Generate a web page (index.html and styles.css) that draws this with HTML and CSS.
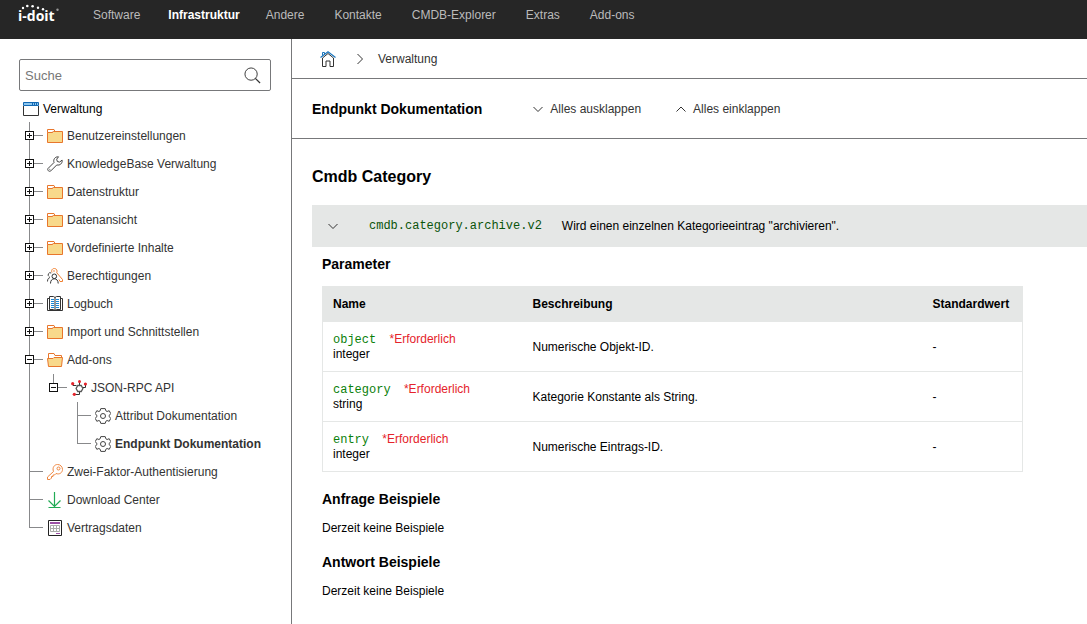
FILE: index.html
```html
<!DOCTYPE html>
<html lang="de">
<head>
  <meta charset="UTF-8">
  <meta name="viewport" content="width=device-width, initial-scale=1.0">
  <title>i-doit - Endpunkt Dokumentation</title>
  <link rel="stylesheet" href="styles.css">
</head>
<body>

<!-- shared icons -->
<svg class="sprite" aria-hidden="true">
  <symbol id="folder" viewBox="0 0 16 16">
    <path d="M.5 4.5H5l1.500-1H15.500V14.500H.5z" fill="#f8d98b" stroke="#e8762c"/>
    <path d="M.5 4.500V1.500H7l1 2H6.500l-1.500 1z" fill="#fff" stroke="#e8762c"/>
  </symbol>
  <symbol id="folder-open" viewBox="0 0 16 16">
    <path d="M1.500 6V1.500H7l1 2h6.500V6" fill="#fff" stroke="#e8762c"/>
    <path d="M.5 6.500H6l1-1h8.500l-1 9h-13z" fill="#f8d98b" stroke="#e8762c"/>
  </symbol>
  <symbol id="gear" viewBox="0 0 16 16">
    <path d="M5.800.6h4.400l.7 2.200 1.200.7 2.100-.8 1.600 3-1.500 1.500v1.600l1.500 1.500-1.600 3-2.100-.8-1.200.7-.7 2.200H5.800l-.7-2.200-1.200-.7-2.100.8-1.600-3 1.500-1.500V7.200L.2 5.700l1.600-3 2.100.8 1.200-.7z" fill="none" stroke="#444" stroke-linejoin="round"/>
    <circle cx="8" cy="8" r="2.500" fill="none" stroke="#444"/>
  </symbol>
  <symbol id="chevron-down" viewBox="0 0 10 10">
    <path d="M.5 3L5 7.500 9.500 3" fill="none" stroke="#333"/>
  </symbol>
  <symbol id="chevron-up" viewBox="0 0 10 10">
    <path d="M.5 7.500L5 3l4.500 4.500" fill="none" stroke="#333"/>
  </symbol>
</svg>

<header class="topbar">
  <a class="logo" href="#" aria-label="i-doit">
    <svg width="44" height="24" viewBox="0 0 44 24">
      <text x="0" y="21" class="logo-text">i-doit</text>
      <g fill="#fff">
        <circle cx="5" cy="8" r="1.200"/>
        <circle cx="9.300" cy="6" r="1.300"/>
        <circle cx="14.600" cy="6.200" r="1.300"/>
        <circle cx="20" cy="7.800" r="1.200"/>
        <circle cx="25" cy="9.300" r="1.200"/>
      </g>
      <circle cx="39.500" cy="9.700" r="1.200" fill="#999"/>
    </svg>
  </a>
  <nav class="main-nav">
    <a href="#">Software</a>
    <a href="#" class="active">Infrastruktur</a>
    <a href="#">Andere</a>
    <a href="#">Kontakte</a>
    <a href="#">CMDB-Explorer</a>
    <a href="#">Extras</a>
    <a href="#">Add-ons</a>
  </nav>
</header>

<div class="page">
  <aside class="sidebar">
    <form class="search">
      <input type="text" placeholder="Suche" aria-label="Suche">
      <button type="button" aria-label="Suchen">
        <svg width="17" height="17" viewBox="0 0 18 18" fill="none" stroke="#333"><circle cx="7.500" cy="7.500" r="6.500"/><path d="M12 12l5 5" stroke-width="1.300"/></svg>
      </button>
    </form>

    <a class="tree-root" href="#">
      <svg class="icon" viewBox="0 0 16 16"><path d="M.5 4v9.500h15V4" fill="#fff" stroke="#333"/><path d="M.5 .5h15v3H.5z" fill="#8cc6ee" stroke="#1268b3"/><path d="M9.500 1v2M11.500 1v2M13.500 1v2" stroke="#1268b3"/></svg>
      Verwaltung
    </a>
    <ul class="tree">
      <li>
        <div class="row">
          <span class="joint"><button class="toggle" aria-label="Ausklappen"></button></span>
          <a href="#"><svg class="icon"><use href="#folder"/></svg>Benutzereinstellungen</a>
        </div>
      </li>
      <li>
        <div class="row">
          <span class="joint"><button class="toggle" aria-label="Ausklappen"></button></span>
          <a href="#"><svg class="icon" viewBox="0 0 16 16"><path d="M1 12.500l6-6C6 3.500 8 .5 11.500.8L9.700 3.200l.6 2.300 2.300.6 2.500-2c.6 3.300-2.400 5.700-5.300 4.800l-6 6c-1.600 1.300-3.900-.8-2.800-2.400z" fill="#fff" stroke="#444"/><circle cx="2.800" cy="13.200" r=".5" fill="#444"/></svg>KnowledgeBase Verwaltung</a>
        </div>
      </li>
      <li>
        <div class="row">
          <span class="joint"><button class="toggle" aria-label="Ausklappen"></button></span>
          <a href="#"><svg class="icon"><use href="#folder"/></svg>Datenstruktur</a>
        </div>
      </li>
      <li>
        <div class="row">
          <span class="joint"><button class="toggle" aria-label="Ausklappen"></button></span>
          <a href="#"><svg class="icon"><use href="#folder"/></svg>Datenansicht</a>
        </div>
      </li>
      <li>
        <div class="row">
          <span class="joint"><button class="toggle" aria-label="Ausklappen"></button></span>
          <a href="#"><svg class="icon"><use href="#folder"/></svg>Vordefinierte Inhalte</a>
        </div>
      </li>
      <li>
        <div class="row">
          <span class="joint"><button class="toggle" aria-label="Ausklappen"></button></span>
          <a href="#">
            <svg class="icon" viewBox="0 0 16 16" fill="none"><path d="M5 4.500C3.500 1.500 7-.8 9.200 1.200c1 1 1 2.500.5 3.500l5.800 6.800v2h-2.500l-1-2" stroke="#f08030"/><circle cx="7" cy="3" r=".8" fill="#f08030"/><path d="M.5 13.500c0-2.500 1-3.500 2.500-4M2.200 8.500a2 2 0 0 1 2-3.500" stroke="#444"/><circle cx="7.300" cy="8.300" r="2.300" fill="#fff" stroke="#333"/><path d="M3.500 15.500c0-3 1.500-4.700 3.800-4.700s3.900 1.700 3.900 4.700" stroke="#333"/></svg>Berechtigungen
          </a>
        </div>
      </li>
      <li>
        <div class="row">
          <span class="joint"><button class="toggle" aria-label="Ausklappen"></button></span>
          <a href="#">
            <svg class="icon" viewBox="0 0 16 16" fill="none"><path d="M2.500.5h4L8 1.500l1.500-1h4v13h-4L8 14.500l-1.500-1h-4z" fill="#fff" stroke="#333"/><path d="M2.500 2.500h-2v12h15v-12h-2M8 1.500v13" stroke="#333"/><path d="M4 3.500h3M4 5.500h3M4 7.500h3M4 9.500h3M4 11.500h3M9 3.500h3M9 5.500h3M9 7.500h3M9 9.500h3M9 11.500h3" stroke="#1b87d6" stroke-width="1.200"/></svg>Logbuch
          </a>
        </div>
      </li>
      <li>
        <div class="row">
          <span class="joint"><button class="toggle" aria-label="Ausklappen"></button></span>
          <a href="#"><svg class="icon"><use href="#folder"/></svg>Import und Schnittstellen</a>
        </div>
      </li>
      <li>
        <div class="row">
          <span class="joint"><button class="toggle open" aria-label="Einklappen"></button></span>
          <a href="#"><svg class="icon"><use href="#folder-open"/></svg>Add-ons</a>
        </div>
        <ul>
          <li>
            <div class="row">
              <span class="joint"><button class="toggle open" aria-label="Einklappen"></button></span>
              <a href="#">
                <svg class="icon" viewBox="0 0 16 16" fill="none"><path d="M8.500 1.500v4M2 3v2.500h3.500M14.500 4v3.500h-3M3 14.500h5.500v-3" stroke="#333"/><path d="M6.800 5.500h3.400l1.700 3-1.700 3H6.800l-1.700-3z" fill="#fff" stroke="#555" stroke-width="1.300"/><g fill="#e5232b"><circle cx="8.500" cy="1.500" r="1.500"/><circle cx="1.700" cy="3.700" r="1.600"/><circle cx="14.400" cy="4" r="1.600"/><circle cx="3.300" cy="14.300" r="1.600"/></g></svg>JSON-RPC API
              </a>
            </div>
            <ul>
              <li>
                <div class="row">
                  <span class="joint"></span>
                  <a href="#"><svg class="icon"><use href="#gear"/></svg>Attribut Dokumentation</a>
                </div>
              </li>
              <li>
                <div class="row">
                  <span class="joint"></span>
                  <a href="#" class="selected"><svg class="icon"><use href="#gear"/></svg>Endpunkt Dokumentation</a>
                </div>
              </li>
            </ul>
          </li>
        </ul>
      </li>
      <li>
        <div class="row">
          <span class="joint"></span>
          <a href="#"><svg class="icon" viewBox="0 0 16 16" fill="none" stroke="#ee8640"><path d="M6.500 7.500C5 3.500 7.500.5 10.500.5c2.800 0 5 2.200 5 5 0 3-3 5.400-6.500 4L7.500 11H6v1.500H4.500V14L3 15.500H.5V13z"/><circle cx="11.500" cy="4.500" r="1.500"/></svg>Zwei-Faktor-Authentisierung</a>
        </div>
      </li>
      <li>
        <div class="row">
          <span class="joint"></span>
          <a href="#"><svg class="icon" viewBox="0 0 16 16" fill="none" stroke="#22ab55"><path d="M7.500 0v14.500M1.500 8.500l6 6 6-6M1.500 15.500h12" stroke-width="1.200"/></svg>Download Center</a>
        </div>
      </li>
      <li>
        <div class="row">
          <span class="joint"></span>
          <a href="#"><svg class="icon" viewBox="0 0 16 16" fill="none"><path d="M1.500.5h13v15h-13z" fill="#fff" stroke="#222"/><path d="M3 3h10" stroke="#9b4fa5" stroke-width="2"/><path d="M3.500 5.500h9v6h-9zM3.500 8.500h9M6.500 5.500v6M9.500 5.500v6" stroke="#aaa"/><path d="M9 13.500h4" stroke="#9b4fa5"/></svg>Vertragsdaten</a>
        </div>
      </li>
    </ul>
  </aside>

  <main class="content">
    <nav class="breadcrumb">
      <a href="#" aria-label="Startseite">
        <svg width="16" height="16" viewBox="0 0 16 16" fill="none"><path d="M2.500 7v8.500h3.500V10h4v5.500h3.500V7L8 2.500z" stroke="#333"/><path d="M.5 6.500L8 .8l7.500 5.700" stroke="#1b75bc" stroke-width="1.200"/><path d="M2.500 4.500V1.500h2v1.500" stroke="#1b75bc"/></svg>
      </a>
      <svg width="6" height="12" viewBox="0 0 6 12"><path d="M.5 1l5 5-5 5" fill="none" stroke="#333"/></svg>
      <a href="#">Verwaltung</a>
    </nav>

    <div class="title-bar">
      <h1>Endpunkt Dokumentation</h1>
      <button class="link-button"><svg width="10" height="10"><use href="#chevron-down"/></svg>Alles ausklappen</button>
      <button class="link-button"><svg width="10" height="10"><use href="#chevron-up"/></svg>Alles einklappen</button>
    </div>

    <div class="docs">
      <h2>Cmdb Category</h2>

      <button class="endpoint">
        <svg width="10" height="10"><use href="#chevron-down"/></svg>
        <code>cmdb.category.archive.v2</code>
        <span>Wird einen einzelnen Kategorieeintrag "archivieren".</span>
      </button>

      <div class="endpoint-body">
        <h3>Parameter</h3>
        <table class="params">
          <thead>
            <tr>
              <th class="col-name">Name</th>
              <th class="col-desc">Beschreibung</th>
              <th>Standardwert</th>
            </tr>
          </thead>
          <tbody>
            <tr>
              <td><code>object</code> <span class="required">*Erforderlich</span><br>integer</td>
              <td>Numerische Objekt-ID.</td>
              <td>-</td>
            </tr>
            <tr>
              <td><code>category</code> <span class="required">*Erforderlich</span><br>string</td>
              <td>Kategorie Konstante als String.</td>
              <td>-</td>
            </tr>
            <tr>
              <td><code>entry</code> <span class="required">*Erforderlich</span><br>integer</td>
              <td>Numerische Eintrags-ID.</td>
              <td>-</td>
            </tr>
          </tbody>
        </table>

        <h3>Anfrage Beispiele</h3>
        <p>Derzeit keine Beispiele</p>

        <h3>Antwort Beispiele</h3>
        <p>Derzeit keine Beispiele</p>
      </div>
    </div>
  </main>
</div>

</body>
</html>
```
FILE: styles.css
```css
* {
  box-sizing: border-box;
}

body {
  margin: 0;
  min-height: 100vh;
  display: flex;
  flex-direction: column;
  background: #fff;
  color: #000;
  font-family: "Liberation Sans", Arial, sans-serif;
  font-size: 12px;
  line-height: 16px;
}

a {
  color: #333;
  text-decoration: none;
}

button {
  padding: 0;
  border: none;
  background: none;
  color: inherit;
  font: inherit;
  cursor: pointer;
}

svg {
  display: block;
  flex: none;
}

code {
  font-family: "Liberation Mono", "Courier New", monospace;
  font-size: 12px;
}

.sprite {
  position: absolute;
  width: 0;
  height: 0;
}

/* top bar */
.topbar {
  display: flex;
  align-items: flex-start;
  gap: 17px;
  height: 39px;
  padding-left: 18px;
  background: #262626;
}

.logo-text {
  fill: #fff;
  font-family: "Open Sans", sans-serif;
  font-size: 14px;
  font-weight: bold;
}

.main-nav {
  display: flex;
}

.main-nav a {
  padding: 7px 15px 7px 14px;
  color: #bbb;
}

.main-nav a + a {
  padding-left: 15px;
}

.main-nav a.active {
  padding-left: 13px;
  padding-right: 11px;
  color: #fff;
  font-weight: bold;
}

.page {
  display: flex;
  flex: 1;
}

/* sidebar */
.sidebar {
  flex: none;
  width: 292px;
  padding: 20px 20px 20px 19px;
  border-right: 1px solid #77787a;
}

.search {
  display: flex;
  align-items: center;
  height: 32px;
  padding: 0 9px 0 5px;
  border: 1px solid #77787a;
  border-radius: 2px;
}

.search input {
  flex: 1;
  min-width: 0;
  padding: 0;
  border: none;
  outline: none;
  font: inherit;
  font-size: 13px;
  line-height: 15px;
}

.search input::placeholder {
  color: #777;
}

.icon {
  width: 16px;
  height: 16px;
  margin-top: 1px;
}

.tree-root {
  display: flex;
  align-items: center;
  gap: 4px;
  margin-top: 4px;
  padding-left: 4px;
  height: 27px;
  color: #000;
}

.tree-root .icon {
  margin-top: 2px;
}

.tree,
.tree ul {
  margin: 0;
  padding: 0;
  list-style: none;
}

.tree {
  padding-left: 6px;
}

.tree ul {
  padding-left: 24px;
}

.tree li {
  background: linear-gradient(#88898b, #88898b) 4px 0 / 1px 100% no-repeat;
}

.tree li:last-child {
  background-size: 1px 14px;
}

.row {
  display: flex;
  height: 28px;
  padding-bottom: 1px;
}

.joint {
  display: flex;
  align-items: center;
  width: 22px;
  background: linear-gradient(#88898b, #88898b) 4px 13px / 14px 1px no-repeat;
}

.toggle {
  width: 9px;
  height: 9px;
  border: 1px solid #111;
  background:
    linear-gradient(#111, #111) center / 5px 1px no-repeat,
    linear-gradient(#111, #111) center / 1px 5px no-repeat,
    #fff;
}

.toggle.open {
  background: linear-gradient(#111, #111) center / 5px 1px no-repeat, #fff;
}

.row a {
  display: flex;
  align-items: center;
  gap: 4px;
  white-space: nowrap;
}

.row .selected {
  font-weight: bold;
}

/* content */
.content {
  flex: 1;
  min-width: 0;
}

.breadcrumb {
  display: flex;
  align-items: center;
  height: 40px;
  padding-left: 28px;
  border-bottom: 1px solid #77787a;
}

.breadcrumb > svg {
  margin: 0 15px 0 21px;
}

.title-bar {
  display: flex;
  align-items: center;
  gap: 35px;
  height: 60px;
  padding-left: 20px;
  border-bottom: 1px solid #77787a;
}

h1,
h2,
h3 {
  margin: 0;
  font-size: 14px;
  line-height: 20px;
}

h1 {
  margin-right: 16px;
}

h2 {
  margin-bottom: 18px;
  font-size: 16px;
}

.link-button {
  display: flex;
  align-items: center;
  gap: 7px;
  color: #333;
}

.docs {
  padding: 28px 0 20px 20px;
}

.endpoint {
  display: flex;
  align-items: center;
  width: 100%;
  height: 42px;
  padding-left: 16px;
  background: #e5e7e6;
  text-align: left;
}

.endpoint code {
  margin: 0 20px 0 31px;
  color: #0a540a;
}

.endpoint-body {
  padding: 7px 64px 0 10px;
}

.params {
  width: 100%;
  max-width: 701px;
  margin: 12px 0 17px;
  border: 1px solid #e5e7e6;
  border-collapse: collapse;
  line-height: 15px;
}

.params th,
.params td {
  padding: 0 10px;
  border-bottom: 1px solid #e5e7e6;
  text-align: left;
}

.params th {
  height: 35px;
  background: #e5e7e6;
}

.params td {
  height: 50px;
  padding-top: 1px;
}

.params code {
  color: #0a800a;
  line-height: 12px;
}

.col-name {
  width: 200px;
}

.col-desc {
  width: 400px;
}

.required {
  margin-left: 10px;
  color: #e5232b;
}

.endpoint-body p {
  margin: 11px 0 16px;
}
```
